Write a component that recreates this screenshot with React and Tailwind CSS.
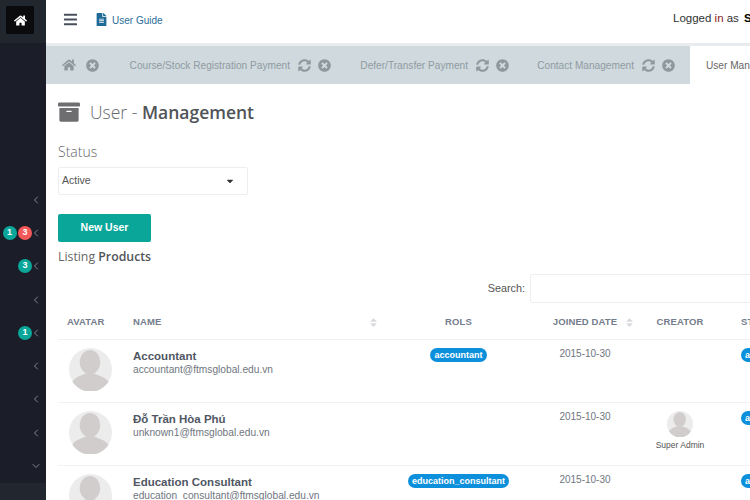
import {
  FaArchive,
  FaBars,
  FaCaretDown,
  FaFileAlt,
  FaHome,
  FaSort,
  FaSyncAlt,
  FaTimesCircle,
} from "react-icons/fa";
import { ChevronDown, ChevronLeft } from "lucide-react";

const sans = "font-['Liberation_Sans',Arial,sans-serif]";
const openSans = "font-['Open_Sans',sans-serif]";

const navItems = [
  { badges: [] },
  { badges: [{ n: 1, c: "bg-[#0aa699]" }, { n: 3, c: "bg-[#f35958]" }] },
  { badges: [{ n: 3, c: "bg-[#0aa699]" }] },
  { badges: [] },
  { badges: [{ n: 1, c: "bg-[#0aa699]" }] },
  { badges: [] },
  { badges: [] },
  { badges: [] },
];

const tabs = [
  { label: "Course/Stock Registration Payment", width: "w-[232px]", pad: "pr-[11px]" },
  { label: "Defer/Transfer Payment", width: "w-[178px]", pad: "pr-[11px]" },
  { label: "Contact Management", width: "w-[170px]", pad: "pr-[15px]" },
];

const users = [
  {
    name: "Accountant",
    email: "accountant@ftmsglobal.edu.vn",
    role: "accountant",
    date: "2015-10-30",
  },
  {
    name: "Đỗ Trần Hòa Phú",
    email: "unknown1@ftmsglobal.edu.vn",
    date: "2015-10-30",
    creator: "Super Admin",
  },
  {
    name: "Education Consultant",
    email: "education_consultant@ftmsglobal.edu.vn",
    role: "education_consultant",
    date: "2015-10-30",
  },
];

function Avatar({ className }) {
  return (
    <svg viewBox="0 0 44 44" className={className}>
      <circle cx="22" cy="22" r="22" fill="#ececec" />
      <ellipse cx="21.5" cy="14.5" rx="10.5" ry="12.5" fill="#d1cdcd" />
      <path
        d="M3.5 34.5C6 29.5 13 28 17 26h9c4 2 11 3.500 14.500 8.500A22 22 0 0 1 3.500 34.500Z"
        fill="#d1cdcd"
      />
    </svg>
  );
}

function Sidebar() {
  return (
    <aside className="w-[46px] shrink-0 bg-[#1b1e28] flex flex-col">
      <div className="h-[43px] shrink-0 bg-[#22262f] pl-[6px] pt-[6px]">
        <div className="w-[28px] h-[28px] bg-[#0b0b0d] flex items-center justify-center">
          <FaHome className="text-white text-[13px]" />
        </div>
      </div>
      <div className="pt-[140px] flex flex-col shrink-0">
        {navItems.map((item, i) => (
          <div
            key={i}
            className="h-[33.3px] flex items-center justify-end pr-[4px]"
          >
            {item.badges.map((b, j) => (
              <span
                key={j}
                className={`${b.c} ${sans} ml-[1.500px] w-[14px] h-[14px] rounded-full text-white text-[9px] font-bold flex items-center justify-center`}
              >
                {b.n}
              </span>
            ))}
            <ChevronLeft
              size={12}
              strokeWidth={1.6}
              className={`text-[#9a9ea6] ${item.badges.length ? "-ml-[2px]" : ""}`}
            />
          </div>
        ))}
        <div className="h-[33.3px] flex items-center justify-end pr-[4px]">
          <ChevronDown size={12} strokeWidth={1.6} className="text-[#9a9ea6]" />
        </div>
      </div>
      <div className="flex-1 bg-[#22262f]" />
    </aside>
  );
}

function Header() {
  return (
    <header className={`h-[43px] shrink-0 bg-white flex items-center pl-[17px] ${sans}`}>
      <FaBars className="text-[#4a4f5c] text-[15px] mt-[-4px]" />
      <FaFileAlt className="text-[#1f6a97] text-[13px] ml-[17px] mt-[-5px]" />
      <span className="text-[#2a6d98] text-[10px] ml-[4px] mt-[-3px]">User Guide</span>
      <span className="ml-auto w-[77px] whitespace-nowrap text-[11.5px] text-[#333] mt-[-5px] overflow-hidden">
        Logged <span className="text-[#8a1c1c]">in</span> as{" "}
        <b className="text-black ml-[2px]">Super Admin</b>
      </span>
    </header>
  );
}

function TabBar() {
  return (
    <div
      className={`h-[41px] shrink-0 bg-[#e9ecef] pt-[3px] flex ${sans} overflow-hidden`}
    >
      <div className="flex flex-1 bg-[#d0d9dd] text-[#8f9ba3] text-[10.150px]">
        <div className="w-[64px] shrink-0 flex items-center pl-[16px] gap-[10px] text-[#8e999f]">
          <FaHome className="text-[14px]" />
          <FaTimesCircle className="text-[13px]" />
        </div>
        {tabs.map((t) => (
          <div
            key={t.label}
            className={`${t.width} ${t.pad} shrink-0 flex items-center justify-end whitespace-nowrap`}
          >
            <span className="mt-[2px]">{t.label}</span>
            <FaSyncAlt className="text-[13px] ml-[8px] text-[#8e999f]" />
            <FaTimesCircle className="text-[13px] ml-[7px] text-[#8e999f]" />
          </div>
        ))}
        <div className="flex-1 bg-white text-[#666] flex items-center pl-[16px] whitespace-nowrap overflow-hidden">
          <span className="mt-[2px]">User Management</span>
        </div>
      </div>
    </div>
  );
}

function Badge({ children }) {
  return (
    <span
      className={`inline-block bg-[#0d90db] text-white text-[9px] font-bold rounded-full h-[14px] leading-[14px] px-[4px] whitespace-nowrap ${sans}`}
    >
      {children}
    </span>
  );
}

function UserTable() {
  return (
    <table className={`${sans} w-[770px] table-fixed border-collapse`}>
      <thead>
        <tr className="h-[36px] text-[9.500px] font-bold text-[#747d8c] tracking-[0.1px] border-b border-[#eef0f3]">
          <th className="w-[75px] text-left pl-[9px] pt-[3px] font-bold">AVATAR</th>
          <th className="w-[246px] text-left pl-0 pt-[3px] font-bold">
            <div className="flex items-center justify-between">
              NAME
              <FaSort className="text-[#d8dadd] text-[11px]" />
            </div>
          </th>
          <th className="w-[159px] pt-[3px] font-bold">ROLS</th>
          <th className="w-[104px] pt-[3px] font-bold">
            <div className="flex items-center justify-center gap-[7px] pl-[8px]">
              JOINED DATE
              <FaSort className="text-[#d8dadd] text-[11px]" />
            </div>
          </th>
          <th className="w-[76px] pt-[3px] font-bold">CREATOR</th>
          <th className="text-left pl-[23px] pt-[3px] font-bold">STATUS</th>
        </tr>
      </thead>
      <tbody>
        {users.map((u) => (
          <tr key={u.email} className="h-[63px] align-top border-b border-[#f0f2f4]">
            <td className="pl-[11px] pt-[8px]">
              <Avatar className="w-[43px] h-[43px]" />
            </td>
            <td className="pt-[9px] whitespace-nowrap">
              <div className="text-[11.500px] font-bold text-[#505763] leading-[15px]">
                {u.name}
              </div>
              <div className="text-[10.200px] text-[#6f7680] leading-[14px] mt-[-1px]">
                {u.email}
              </div>
            </td>
            <td className="pt-[1px] text-center">
              {u.role && <Badge>{u.role}</Badge>}
            </td>
            <td className="pt-[7px] pr-[10px] text-center text-[10px] text-[#6f7680] leading-[14px]">
              {u.date}
            </td>
            <td className="pt-[8px] text-center">
              {u.creator && (
                <div className="flex flex-col items-center">
                  <Avatar className="w-[26px] h-[26px]" />
                  <span className="text-[8.500px] text-[#555] mt-[2px] whitespace-nowrap">
                    {u.creator}
                  </span>
                </div>
              )}
            </td>
            <td className="pt-[1px] pl-[23px]">
              <Badge>active</Badge>
            </td>
          </tr>
        ))}
      </tbody>
    </table>
  );
}

export default function App() {
  return (
    <div className="h-screen w-full flex overflow-hidden bg-white">
      <Sidebar />
      <main className="flex-1 min-w-0 flex flex-col overflow-hidden">
        <Header />
        <TabBar />
        <div className="pl-[12px] flex-1">
          {/* Title */}
          <div className={`flex items-center mt-[14px] ${openSans}`}>
            <FaArchive className="text-[#6e6e70] text-[22px]" />
            <h1 className="text-[17.500px] leading-[28px] ml-[10px] font-light text-[#666a70]">
              User - <span className="font-semibold text-[#505458]">Management</span>
            </h1>
          </div>

          {/* Status filter */}
          <div className={`${openSans} text-[14px] font-light text-[#666] mt-[16px] leading-[20px]`}>
            Status
          </div>
          <div
            className={`${sans} mt-[5px] w-[190px] h-[28px] border border-[#eceef1] rounded-[2px] flex items-center justify-between pl-[3px] pr-[12px] text-[10.500px] text-[#555]`}
          >
            Active
            <FaCaretDown className="text-[#333] text-[10px]" />
          </div>

          <button
            className={`${sans} block mt-[19px] w-[93px] h-[28px] bg-[#0aa699] rounded-[2px] text-white text-[10.500px] font-bold`}
          >
            New User
          </button>

          <div className={`${openSans} text-[12.300px] text-[#666] mt-[6px] leading-[17px]`}>
            Listing <span className="font-semibold text-[#505458]">Products</span>
          </div>

          {/* Search */}
          <div className={`${sans} flex items-center justify-end mt-[9px] mr-[-40px]`}>
            <span className="text-[10.800px] text-[#555] mr-[5px]">Search:</span>
            <div className="w-[260px] h-[29px] border border-[#eceef1] rounded-[2px]" />
          </div>

          <UserTable />
        </div>
      </main>
    </div>
  );
}
